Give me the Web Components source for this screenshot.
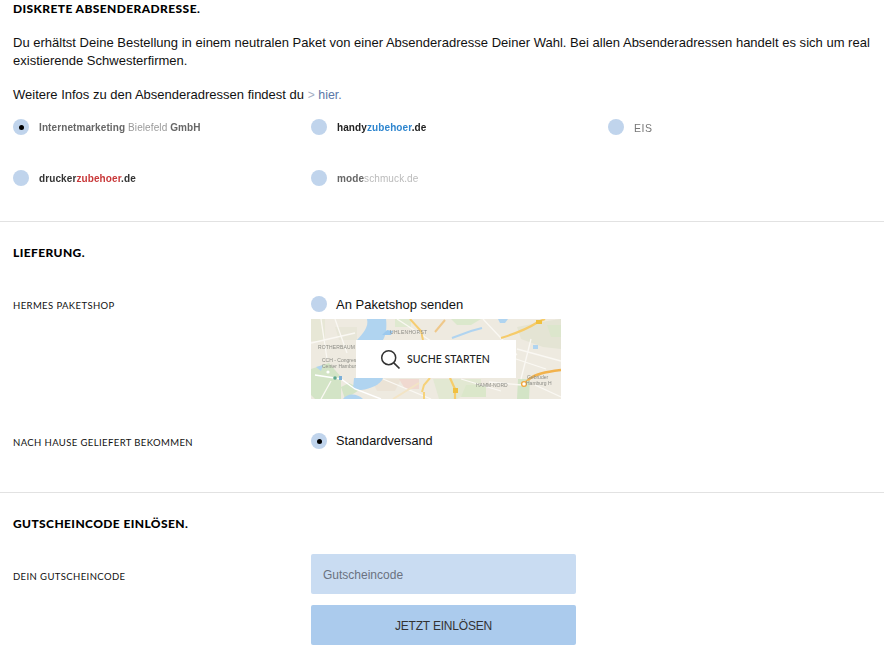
<!DOCTYPE html>
<html><head><meta charset="utf-8"><style>
html,body{margin:0;padding:0;background:#fff;overflow:hidden}
body{font-family:"Liberation Sans",Arial,sans-serif;font-size:13px;color:#111}
</style></head><body>
<template id="t-section"><style>
:host{display:block;padding:0 13px;box-sizing:border-box;height:var(--h);border-bottom:var(--b,1px solid #e2e2e2);overflow:hidden}
h2{margin:var(--top,0) 0 0;font:900 12px/16px Lato,sans-serif;letter-spacing:.4px;color:#000;text-transform:uppercase}
</style><h2><slot name="title"></slot></h2><slot></slot></template>
<template id="t-radio"><style>
:host{display:flex;align-items:center;gap:var(--gap,10px)}
i{display:block;flex:none;width:16px;height:16px;border-radius:50%;background:#c0d4ec;position:relative}
:host([checked]) i::after{content:"";position:absolute;left:5.5px;top:5.5px;width:5px;height:5px;border-radius:50%;background:#000}
</style><i></i><slot></slot></template>
<template id="t-logo"><style>
:host{display:inline-block;font:700 10px/14px "Liberation Sans",Arial,sans-serif;letter-spacing:.1px;color:#555;white-space:nowrap;filter:blur(.3px);padding-top:2px}
</style><slot></slot></template>
<template id="t-row"><style>
:host{display:grid;grid-template-columns:298px 1fr}
.l{font:400 9.5px/12px Lato,sans-serif;letter-spacing:.4px;color:#111;text-transform:uppercase;padding-top:var(--lt,0)}
</style><div class="l"><slot name="label"></slot></div><div><slot></slot></div></template>
<template id="t-map"><style>
:host{display:block;position:relative;width:250px;height:80px;overflow:hidden;background:#eeeae1}
svg.m{display:block;position:absolute;left:0;top:0;filter:blur(.5px)}
.b{position:absolute;left:45px;top:21px;width:160px;height:38px;background:#fff;display:flex;align-items:center;justify-content:center;gap:6px;font:500 10.5px/14px Lato,sans-serif;letter-spacing:.05px;color:#222;box-sizing:border-box;padding-right:2px}
.t{font:5px "Liberation Sans",sans-serif;fill:#8b8b85}
</style><svg class="m" width="250" height="80" viewBox="0 0 250 80">
<path d="M0 0H250V80H0Z" fill="#eeeae0"/>
<path d="M0 50L18 44L30 58V80H4L0 76Z" fill="#d3e4c6"/><path d="M30 68L38 64L50 70L34 80Z" fill="#d3e4c6"/>
<path d="M24 8H46V21H28Z" fill="#e8e6d8"/><path d="M0 0H14V22H0Z" fill="#e7e7d6"/><path d="M84 0H100V8H84Z" fill="#dfe9d0"/>
<path d="M122 60H170V66L146 80H128Z" fill="#e2e8d2"/><path d="M60 60H90L84 72H66Z" fill="#ebe3d6"/><path d="M88 60H108V70H94Z" fill="#f0d9d0"/>
<path d="M207 60H219L218 80H206Z" fill="#d3e4c6"/><path d="M155 66H175V78H150Z" fill="#dbe7ca"/>
<path d="M206 8L236 2L250 0V30L232 28L210 20Z" fill="#e4e4d4"/><path d="M140 0H170L160 6H146Z" fill="#dbe8cc"/><path d="M236 6H250V18H240Z" fill="#dce6cc"/>
<path d="M56 0H75C76 8 75 16 72 21L46 21C52 14 58 8 56 0Z" fill="#b0d4f0"/>
<path d="M43 59H72C70 65 60 70 50 71L42 70Z" fill="#b0d4f0"/>
<path d="M32 80C36 74 46 74 52 80Z" fill="#b0d4f0"/>
<path d="M71 16L76 11L82 12L80 16Z" fill="#9cc9ee"/>
<path d="M187 0H197L194 4H189Z" fill="#b0d4f0"/><path d="M5 48L12 46L10 52Z" fill="#b0d4f0"/><rect x="222" y="26" width="5" height="4" fill="#b0d4f0"/>
<path d="M141 19L160 12L171 9" stroke="#b0d4f0" stroke-width="2" fill="none"/>
<path d="M4 56L30 60L44 70L70 80" stroke="#fff" stroke-width="1.4" fill="none"/>
<path d="M10 0L16 40M24 0L36 34M0 24L44 14M20 62L10 80M72 60L120 80M86 0L120 22M172 0L206 36M206 30L250 42M220 20L210 60M224 66L250 78M178 63L211 66M205 40L235 50M150 60L190 72" stroke="#faf8f3" stroke-width="1.3" fill="none"/>
<path d="M99 0L110 12L112 21" stroke="#f6cd72" stroke-width="2" fill="none"/>
<path d="M124 13L134 1" stroke="#efc88a" stroke-width="2" fill="none"/>
<path d="M190 19C203 15 215 11 227 3L234 0" stroke="#f6cb6a" stroke-width="2.2" fill="none"/>
<path d="M111 73L113 66L119 59M113 73V80" stroke="#f6d27a" stroke-width="2" fill="none"/>
<path d="M139 59L144 70V80" stroke="#f6cd6c" stroke-width="2.2" fill="none"/>
<path d="M82 80L108 64" stroke="#f3e4c5" stroke-width="2" fill="none"/>
<path d="M217 61C224 55 234 53 250 51" stroke="#f2b24c" stroke-width="2.4" fill="none"/>
<circle cx="213" cy="65" r="2.4" fill="#fff" stroke="#f2a63a" stroke-width="1.3"/>
<path d="M218 60L214 63" stroke="#f2b24c" stroke-width="1.5"/>
<rect x="142" y="69" width="5" height="5" fill="#f0c040"/><rect x="225" y="1" width="6" height="4" fill="#f0c040"/>
<circle cx="24" cy="59" r="1.8" fill="#5ea88e"/><rect x="28" y="57" width="3" height="4" fill="#7cb0d8"/><circle cx="17" cy="53" r="1.6" fill="#fff"/>
<text class="t" x="7" y="30" letter-spacing=".15">ROTHERBAUM</text><text class="t" x="11" y="43">CCH - Congress</text><text class="t" x="11" y="49">Center Hamburg</text><text class="t" x="79" y="15" letter-spacing=".3">UHLENHORST</text><text class="t" x="165" y="68">HAMM-NORD</text><text class="t" x="216" y="60">Gebrüder</text><text class="t" x="215" y="66">Hamburg H</text>
</svg><div class="b"><svg width="21" height="21" viewBox="0 0 21 21"><circle cx="8.7" cy="8.7" r="7" fill="none" stroke="#333" stroke-width="1.5"/><path d="M13.8 13.8L19.5 19.5" stroke="#333" stroke-width="1.7"/></svg><span>SUCHE STARTEN</span></div></template>
<template id="t-btn"><style>
:host{display:flex;align-items:center;width:265px;height:40px;border-radius:2px;box-sizing:border-box;background:var(--bg);color:var(--c);font-size:12px;letter-spacing:var(--ls,0);justify-content:var(--j,center);padding:1px 0 0 var(--pl,0)}
</style><slot></slot></template>
<script>
for(const [n,t] of [["x-section","t-section"],["x-radio","t-radio"],["x-logo","t-logo"],["x-row","t-row"],["x-map","t-map"],["x-btn","t-btn"]]){
customElements.define(n,class extends HTMLElement{constructor(){super();this.attachShadow({mode:"open"}).appendChild(document.getElementById(t).content.cloneNode(true))}});
}
</script>
<x-section style="--h:222px;--top:1px">
<span slot="title">Diskrete Absenderadresse.</span>
<p style="margin:17px 0 0;line-height:18px;max-width:860px;letter-spacing:.012px">Du erhältst Deine Bestellung in einem neutralen Paket von einer Absenderadresse Deiner Wahl. Bei allen Absenderadressen handelt es sich um real existierende Schwesterfirmen.</p>
<p style="margin:16px 0 0;line-height:18px">Weitere Infos zu den Absenderadressen findest du <span style="color:#a4aec4;font-size:12px">&gt;</span> <span style="color:#5b77a8;font-size:12.4px">hier.</span></p>
<div style="display:grid;grid-template-columns:298px 297px 1fr;grid-auto-rows:51px;margin-top:15px;--gap:10px">
<x-radio checked style="height:16px"><x-logo style="color:#666">Internetmarketing <span style="font-weight:400;color:#999">Bielefeld</span> GmbH</x-logo></x-radio>
<x-radio style="height:16px"><x-logo style="color:#222">handy<span style="color:#2f86cf">zubehoer</span>.de</x-logo></x-radio>
<x-radio style="height:16px"><x-logo style="color:#777;font-weight:400;letter-spacing:.6px;font-size:10.5px">EIS</x-logo></x-radio>
<x-radio style="height:16px"><x-logo style="color:#333">drucker<span style="color:#c9393a">zubehoer</span>.de</x-logo></x-radio>
<x-radio style="height:16px"><x-logo style="color:#666">mode<span style="font-weight:400;color:#bbb">schmuck.de</span></x-logo></x-radio>
</div>
</x-section>
<x-section style="--h:271px;--top:23px">
<span slot="title">Lieferung.</span>
<x-row style="margin-top:35px;--lt:4px">
<span slot="label">Hermes Paketshop</span>
<x-radio style="height:16px;--gap:9px">An Paketshop senden</x-radio>
<x-map style="margin-top:7px"></x-map>
</x-row>
<x-row style="margin-top:34px;--lt:4px">
<span slot="label">Nach Hause geliefert bekommen</span>
<x-radio checked style="height:16px;--gap:9px"><span style="font-size:12.7px">Standardversand</span></x-radio>
</x-row>
</x-section>
<x-section style="--h:164px;--top:23px;--b:0">
<span slot="title">Gutscheincode einlösen.</span>
<x-row style="margin-top:22px;--lt:17px">
<span slot="label">Dein Gutscheincode</span>
<div style="display:flex;flex-direction:column;gap:11px">
<x-btn style="--bg:#c9dcf2;--c:#6b7280;--j:flex-start;--pl:12px">Gutscheincode</x-btn>
<x-btn style="--bg:#abcbed;--c:#333;--ls:-.2px">JETZT EINLÖSEN</x-btn>
</div>
</x-row>
</x-section>
</body></html>
